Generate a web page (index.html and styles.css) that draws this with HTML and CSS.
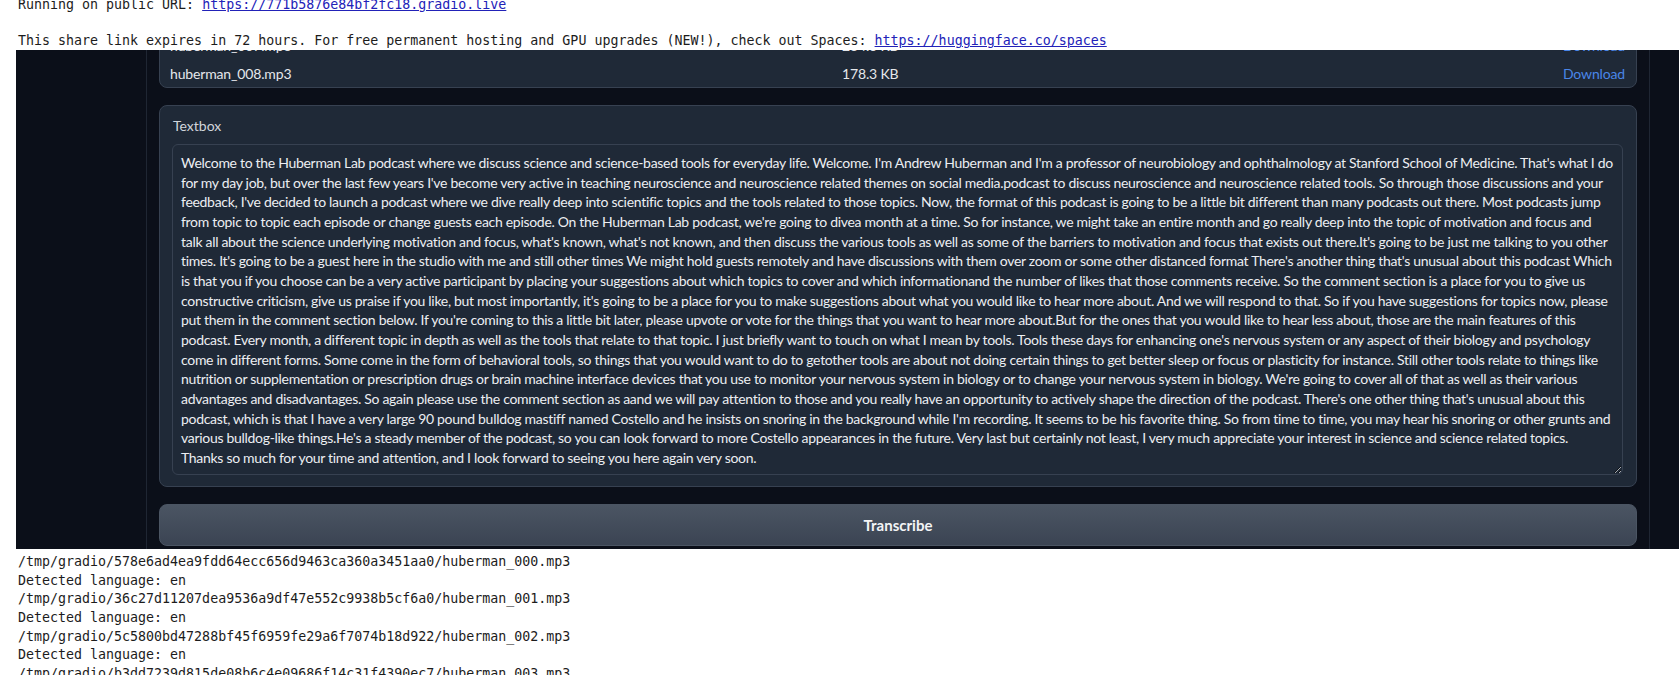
FILE: index.html
```html
<!DOCTYPE html>
<html lang="en">
<head>
<meta charset="utf-8">
<title>Gradio output</title>
<link rel="stylesheet" href="styles.css">
</head>
<body>
<pre class="console console-top">Running on public URL: <a href="#">https://771b5876e84bf2fc18.gradio.live</a>

This share link expires in 72 hours. For free permanent hosting and GPU upgrades (NEW!), check out Spaces: <a href="#">https://huggingface.co/spaces</a></pre>
<div class="frame">
  <div class="app">
    <div class="files">
      <div class="file-row"><span class="fname">huberman_007.mp3</span><span class="fsize">234.6 KB</span><a class="dl" href="#">Download</a></div>
      <div class="file-row"><span class="fname">huberman_008.mp3</span><span class="fsize">178.3 KB</span><a class="dl" href="#">Download</a></div>
    </div>
    <div class="block">
      <label class="block-label" for="tb">Textbox</label>
      <textarea id="tb" class="textarea" wrap="off" spellcheck="false">Welcome to the Huberman Lab podcast where we discuss science and science-based tools for everyday life. Welcome. I'm Andrew Huberman and I'm a professor of neurobiology and ophthalmology at Stanford School of Medicine. That's what I do
for my day job, but over the last few years I've become very active in teaching neuroscience and neuroscience related themes on social media.podcast to discuss neuroscience and neuroscience related tools. So through those discussions and your
feedback, I've decided to launch a podcast where we dive really deep into scientific topics and the tools related to those topics. Now, the format of this podcast is going to be a little bit different than many podcasts out there. Most podcasts jump
from topic to topic each episode or change guests each episode. On the Huberman Lab podcast, we're going to divea month at a time. So for instance, we might take an entire month and go really deep into the topic of motivation and focus and
talk all about the science underlying motivation and focus, what's known, what's not known, and then discuss the various tools as well as some of the barriers to motivation and focus that exists out there.It's going to be just me talking to you other
times. It's going to be a guest here in the studio with me and still other times We might hold guests remotely and have discussions with them over zoom or some other distanced format There's another thing that's unusual about this podcast Which
is that you if you choose can be a very active participant by placing your suggestions about which topics to cover and which informationand the number of likes that those comments receive. So the comment section is a place for you to give us
constructive criticism, give us praise if you like, but most importantly, it's going to be a place for you to make suggestions about what you would like to hear more about. And we will respond to that. So if you have suggestions for topics now, please
put them in the comment section below. If you're coming to this a little bit later, please upvote or vote for the things that you want to hear more about.But for the ones that you would like to hear less about, those are the main features of this
podcast. Every month, a different topic in depth as well as the tools that relate to that topic. I just briefly want to touch on what I mean by tools. Tools these days for enhancing one's nervous system or any aspect of their biology and psychology
come in different forms. Some come in the form of behavioral tools, so things that you would want to do to getother tools are about not doing certain things to get better sleep or focus or plasticity for instance. Still other tools relate to things like
nutrition or supplementation or prescription drugs or brain machine interface devices that you use to monitor your nervous system in biology or to change your nervous system in biology. We're going to cover all of that as well as their various
advantages and disadvantages. So again please use the comment section as aand we will pay attention to those and you really have an opportunity to actively shape the direction of the podcast. There's one other thing that's unusual about this
podcast, which is that I have a very large 90 pound bulldog mastiff named Costello and he insists on snoring in the background while I'm recording. It seems to be his favorite thing. So from time to time, you may hear his snoring or other grunts and
various bulldog-like things.He's a steady member of the podcast, so you can look forward to more Costello appearances in the future. Very last but certainly not least, I very much appreciate your interest in science and science related topics.
Thanks so much for your time and attention, and I look forward to seeing you here again very soon.</textarea>
    </div>
    <button class="btn" type="button">Transcribe</button>
  </div>
</div>
<pre class="console console-bottom">/tmp/gradio/578e6ad4ea9fdd64ecc656d9463ca360a3451aa0/huberman_000.mp3
Detected language: en
/tmp/gradio/36c27d11207dea9536a9df47e552c9938b5cf6a0/huberman_001.mp3
Detected language: en
/tmp/gradio/5c5800bd47288bf45f6959fe29a6f7074b18d922/huberman_002.mp3
Detected language: en
/tmp/gradio/b3dd7239d815de08b6c4e09686f14c31f4390ec7/huberman_003.mp3</pre>
</body>
</html>
```

FILE: styles.css
```css
* {
  box-sizing: border-box;
}

html, body {
  margin: 0;
  padding: 0;
  background: #ffffff;
  overflow: hidden;
}

.console {
  margin: 0;
  padding-left: 18px;
  font-family: "DejaVu Sans Mono", "Liberation Mono", monospace;
  font-size: 13.3px;
  color: #1c1c1c;
  white-space: pre;
}

.console-top {
  line-height: 18px;
  margin-top: -4px;
}

.console-bottom {
  line-height: 18.67px;
  margin-top: 4px;
}

.console a {
  color: #2222b8;
  text-decoration: underline;
}

.frame {
  margin-left: 16px;
  height: 499px;
  overflow: hidden;
  background: #0b0f19;
  font-family: "Lato", "Liberation Sans", sans-serif;
  color: #e5e7eb;
}

.app {
  width: 1504px;
  margin-left: 130px;
  margin-top: -20px;
  height: 519px;
  border-left: 1px solid #1f2633;
  border-right: 1px solid #1f2633;
  padding: 0 12px;
  display: flex;
  flex-direction: column;
  gap: 17px;
}

.files {
  background: #1f2937;
  border: 1px solid #374151;
  border-radius: 8px;
  padding: 0 11px 0 10px;
}

.file-row {
  height: 28px;
  display: grid;
  grid-template-columns: 672px 1fr auto;
  align-items: center;
  font-size: 14px;
  letter-spacing: -0.15px;
}

.dl {
  color: #4a86e8;
  text-decoration: none;
}

.block {
  background: #1f2937;
  border: 1px solid #374151;
  border-radius: 8px;
  padding: 10px 13px 11px 12px;
  display: flex;
  flex-direction: column;
}

.block-label {
  font-size: 14px;
  line-height: 20px;
  color: #d1d5db;
  padding-left: 1px;
}

.textarea {
  margin-top: 8px;
  height: 331px;
  width: 100%;
  background: #1f2937;
  color: #eceef2;
  border: 1px solid #374151;
  border-radius: 6px;
  padding: 8px 8px;
  font-family: "Lato", "Liberation Sans", sans-serif;
  font-size: 14px;
  line-height: 19.67px;
  letter-spacing: -0.3px;
  white-space: pre;
  overflow: hidden;
  resize: vertical;
  outline: none;
}

.btn {
  height: 42px;
  flex: none;
  width: 100%;
  border: 1px solid #4b5563;
  border-radius: 8px;
  background: linear-gradient(to bottom, #4b5563, #3b4453);
  color: #f3f4f6;
  font-family: "Lato", "Liberation Sans", sans-serif;
  font-size: 15px;
  font-weight: 700;
  cursor: pointer;
}
```
